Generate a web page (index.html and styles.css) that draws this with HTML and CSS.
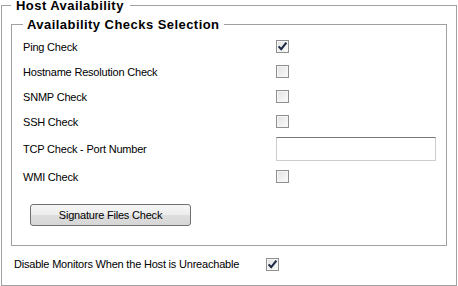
FILE: index.html
```html
<!DOCTYPE html>
<html lang="en">
<head>
  <meta charset="UTF-8">
  <title>Host Availability</title>
  <link rel="stylesheet" href="styles.css">
</head>
<body>

<fieldset class="group host">
  <legend>Host Availability</legend>

  <fieldset class="group checks">
    <legend>Availability Checks Selection</legend>

    <div class="rows">
      <div class="label">Ping Check</div>
      <div class="ctl">
        <span class="cb"><svg width="11" height="11" viewBox="0 0 11 11"><path d="M1.6 5.4 L4.2 8.2 L9.4 1.6" fill="none" stroke="#1f2b44" stroke-width="2.1"/></svg></span>
      </div>

      <div class="label">Hostname Resolution Check</div>
      <div class="ctl"><span class="cb"></span></div>

      <div class="label">SNMP Check</div>
      <div class="ctl"><span class="cb"></span></div>

      <div class="label">SSH Check</div>
      <div class="ctl"><span class="cb"></span></div>

      <div class="label">TCP Check - Port Number</div>
      <div class="ctl"><input class="port" type="text"></div>

      <div class="label">WMI Check</div>
      <div class="ctl"><span class="cb"></span></div>
    </div>

    <button class="sig">Signature Files Check</button>
  </fieldset>

  <div class="disable">
    <div class="label">Disable Monitors When the Host is Unreachable</div>
    <div class="ctl">
      <span class="cb"><svg width="11" height="11" viewBox="0 0 11 11"><path d="M1.6 5.4 L4.2 8.2 L9.4 1.6" fill="none" stroke="#1f2b44" stroke-width="2.1"/></svg></span>
    </div>
  </div>
</fieldset>

</body>
</html>
```

FILE: styles.css
```css
body {
  margin: 0;
  background-color: #fff;
  font-family: "Liberation Sans", Arial, sans-serif;
  font-size: 11px;
  letter-spacing: -0.2px;
  color: #000;
}
.group {
  border: 1px solid #a0a0a0;
  min-width: 0;
}
.group legend {
  font-size: 13px;
  font-weight: bold;
  line-height: 11px;
  letter-spacing: 0.45px;
}
.host {
  margin: 0 1px;
  padding: 8px 9px 11px 9px;
}
.host > legend {
  padding: 0 6px 0 5px;
}
.checks {
  margin: 0;
  padding: 4px 11px 19px 11px;
}
.checks > legend {
  padding: 0 5px 0 4px;
}
/* Lista de chequeos */
.rows {
  display: grid;
  grid-template-columns: 253px auto;
  grid-template-rows: 25px 25px 25px 25px 30px 25px;
}
.label, .ctl {
  display: flex;
  align-items: center;
}
.cb {
  box-sizing: border-box;
  width: 13px;
  height: 13px;
  border: 1px solid #8f8f8f;
  background: linear-gradient(135deg, #e2e2e2, #fcfcfc);
  box-shadow: inset 0 0 0 1px #f6f6f6;
  display: flex;
  align-items: center;
  justify-content: center;
}
.cb svg {
  display: block;
}
.port {
  box-sizing: border-box;
  width: 160px;
  height: 24px;
  margin: 0;
  border: 1px solid #cdcdcd;
  border-top-color: #777;
  background: #fff;
}
.sig {
  display: block;
  box-sizing: border-box;
  width: 161px;
  height: 22px;
  margin: 15px 0 0 7px;
  padding: 0;
  border: 1px solid #707070;
  border-radius: 3px;
  background: linear-gradient(#f6f6f6, #ececec 50%, #dedede 51%, #d6d6d6);
  font-family: inherit;
  font-size: 11px;
  letter-spacing: -0.2px;
  color: #000;
}
.disable {
  display: grid;
  grid-template-columns: 252px auto;
  height: 20px;
  margin-top: 8px;
  padding-left: 3px;
}
```
